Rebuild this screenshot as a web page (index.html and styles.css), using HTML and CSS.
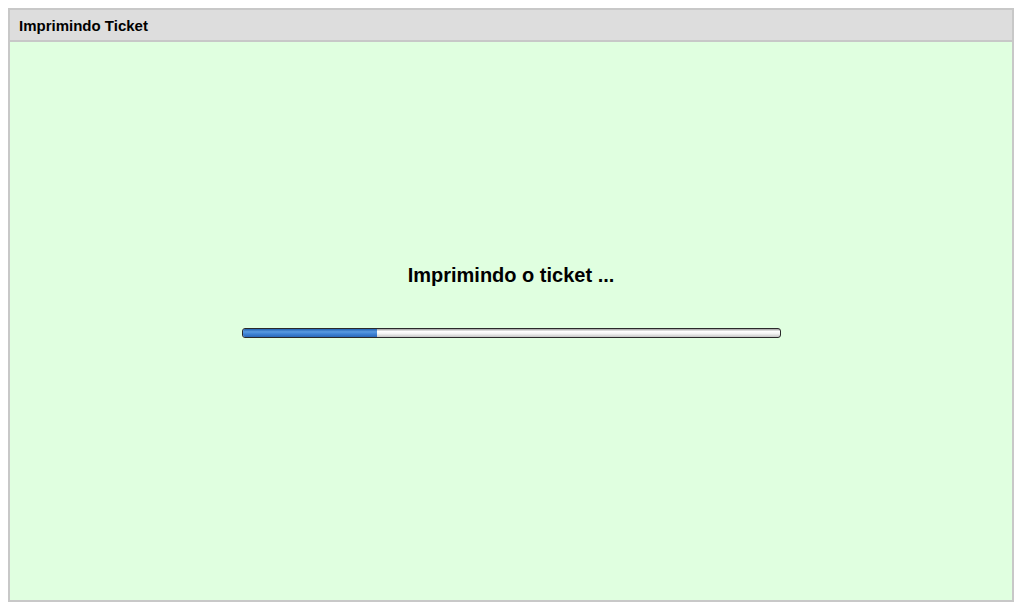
FILE: index.html
```html
<!DOCTYPE html>
<html>
<head>
<meta charset="utf-8">
<link rel="stylesheet" href="styles.css">
</head>
<body>
<div class="panel">
  <div class="header">Imprimindo Ticket</div>
  <div class="content">
    <div class="message">Imprimindo o ticket ...</div>
    <div class="progress"><div class="fill" style="width:25%"></div></div>
  </div>
</div>
</body>
</html>
```
FILE: styles.css
```css
html, body { margin: 0; padding: 0; background: #ffffff; }
body { padding: 8px; font-family: "Liberation Sans", Arial, sans-serif; }
.panel {
  width: 1002px;
  height: 590px;
  border: 2px solid #c8c8c8;
  display: flex;
  flex-direction: column;
  background: #e0ffe0;
}
.header {
  height: 30px;
  background: #dddddd;
  border-bottom: 2px solid #c8c8c8;
  font-size: 15px;
  font-weight: bold;
  color: #000;
  padding-left: 9px;
  line-height: 31px;
  box-sizing: content-box;
}
.content {
  flex: 1;
  display: flex;
  flex-direction: column;
  align-items: center;
  padding-top: 221px;
}
.message {
  font-size: 20px;
  font-weight: bold;
  color: #000;
  line-height: 24px;
}
.progress {
  margin-top: 41px;
  width: 537px;
  height: 8px;
  border: 1px solid #2a2a2a;
  border-radius: 3px;
  background: linear-gradient(#9a9a9a 0%, #ffffff 30%, #f2f2f2 60%, #c4c4c4 100%);
  overflow: hidden;
}
.fill {
  height: 100%;
  background: linear-gradient(#1f5fb0 0%, #5a9be0 35%, #3f84d6 60%, #2a68b8 100%);
}
```
